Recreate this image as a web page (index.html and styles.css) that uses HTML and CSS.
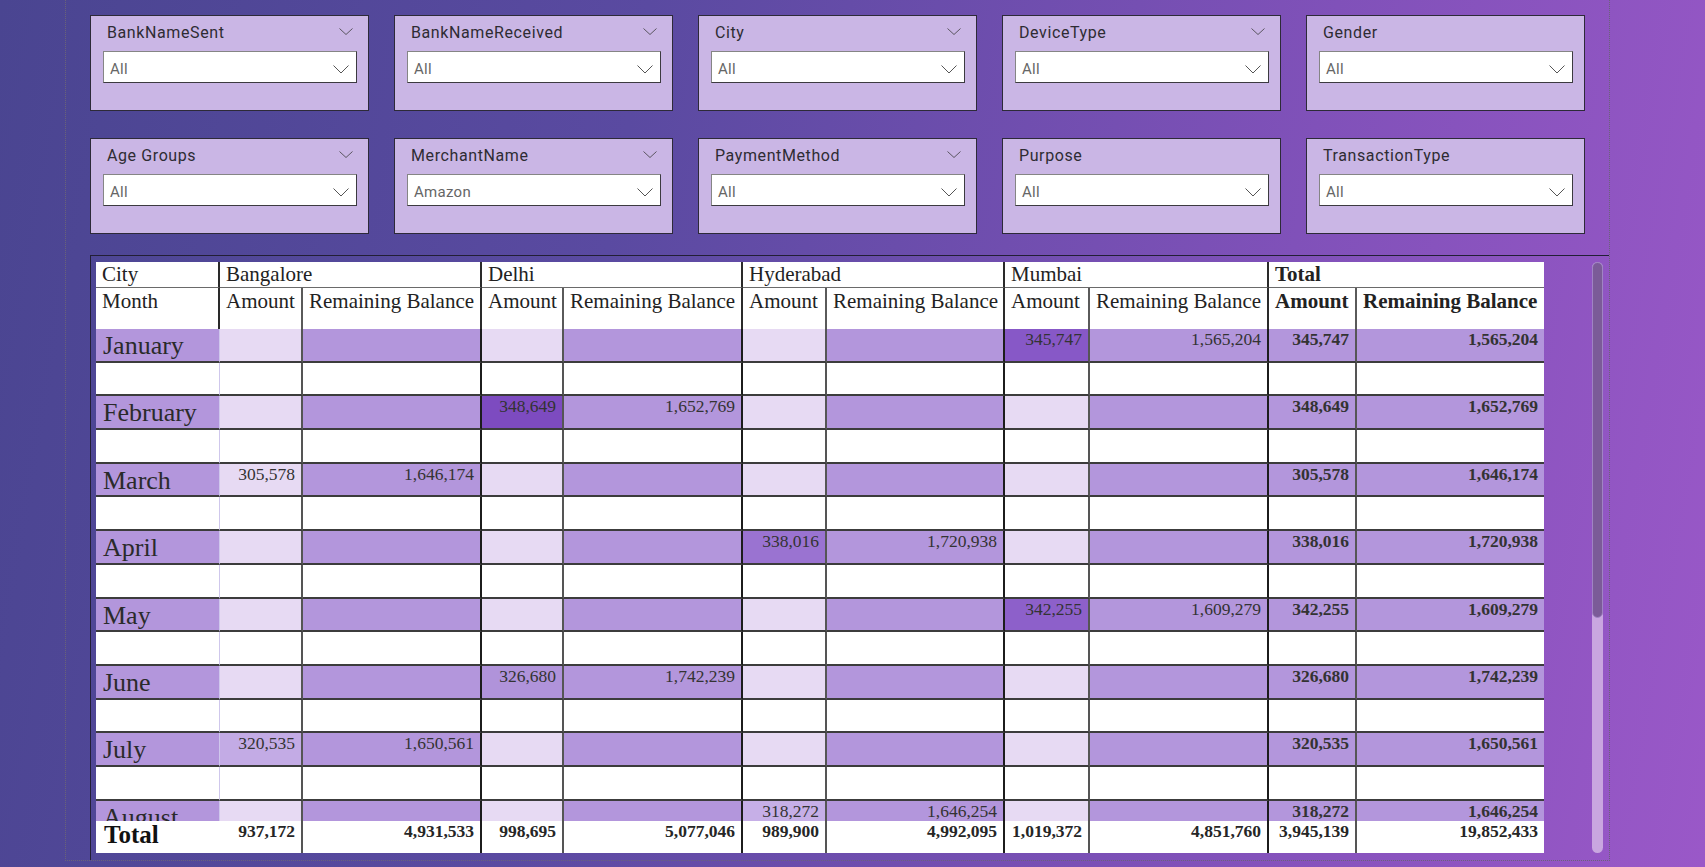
FILE: index.html
```html
<!DOCTYPE html>
<html>
<head>
<meta charset="utf-8">
<link rel="stylesheet" href="styles.css">
</head>
<body>
<div class="canvas">
  <div class="slicers">
    <div class="slicer">
      <div class="slicer-head"><span>BankNameSent</span><svg class="hchev" width="14" height="7" viewBox="0 0 14 7"><path d="M0.5 0.5 L7 6.5 L13.5 0.5"/></svg></div>
      <div class="dropdown"><span>All</span><svg class="dchev" width="16" height="9" viewBox="0 0 16 9"><path d="M0.5 0.5 L8 8 L15.5 0.5"/></svg></div>
    </div>
    <div class="slicer">
      <div class="slicer-head"><span>BankNameReceived</span><svg class="hchev" width="14" height="7" viewBox="0 0 14 7"><path d="M0.5 0.5 L7 6.5 L13.5 0.5"/></svg></div>
      <div class="dropdown"><span>All</span><svg class="dchev" width="16" height="9" viewBox="0 0 16 9"><path d="M0.5 0.5 L8 8 L15.5 0.5"/></svg></div>
    </div>
    <div class="slicer">
      <div class="slicer-head"><span>City</span><svg class="hchev" width="14" height="7" viewBox="0 0 14 7"><path d="M0.5 0.5 L7 6.5 L13.5 0.5"/></svg></div>
      <div class="dropdown"><span>All</span><svg class="dchev" width="16" height="9" viewBox="0 0 16 9"><path d="M0.5 0.5 L8 8 L15.5 0.5"/></svg></div>
    </div>
    <div class="slicer">
      <div class="slicer-head"><span>DeviceType</span><svg class="hchev" width="14" height="7" viewBox="0 0 14 7"><path d="M0.5 0.5 L7 6.5 L13.5 0.5"/></svg></div>
      <div class="dropdown"><span>All</span><svg class="dchev" width="16" height="9" viewBox="0 0 16 9"><path d="M0.5 0.5 L8 8 L15.5 0.5"/></svg></div>
    </div>
    <div class="slicer">
      <div class="slicer-head"><span>Gender</span></div>
      <div class="dropdown"><span>All</span><svg class="dchev" width="16" height="9" viewBox="0 0 16 9"><path d="M0.5 0.5 L8 8 L15.5 0.5"/></svg></div>
    </div>
    <div class="slicer">
      <div class="slicer-head"><span>Age Groups</span><svg class="hchev" width="14" height="7" viewBox="0 0 14 7"><path d="M0.5 0.5 L7 6.5 L13.5 0.5"/></svg></div>
      <div class="dropdown"><span>All</span><svg class="dchev" width="16" height="9" viewBox="0 0 16 9"><path d="M0.5 0.5 L8 8 L15.5 0.5"/></svg></div>
    </div>
    <div class="slicer">
      <div class="slicer-head"><span>MerchantName</span><svg class="hchev" width="14" height="7" viewBox="0 0 14 7"><path d="M0.5 0.5 L7 6.5 L13.5 0.5"/></svg></div>
      <div class="dropdown"><span>Amazon</span><svg class="dchev" width="16" height="9" viewBox="0 0 16 9"><path d="M0.5 0.5 L8 8 L15.5 0.5"/></svg></div>
    </div>
    <div class="slicer">
      <div class="slicer-head"><span>PaymentMethod</span><svg class="hchev" width="14" height="7" viewBox="0 0 14 7"><path d="M0.5 0.5 L7 6.5 L13.5 0.5"/></svg></div>
      <div class="dropdown"><span>All</span><svg class="dchev" width="16" height="9" viewBox="0 0 16 9"><path d="M0.5 0.5 L8 8 L15.5 0.5"/></svg></div>
    </div>
    <div class="slicer">
      <div class="slicer-head"><span>Purpose</span></div>
      <div class="dropdown"><span>All</span><svg class="dchev" width="16" height="9" viewBox="0 0 16 9"><path d="M0.5 0.5 L8 8 L15.5 0.5"/></svg></div>
    </div>
    <div class="slicer">
      <div class="slicer-head"><span>TransactionType</span></div>
      <div class="dropdown"><span>All</span><svg class="dchev" width="16" height="9" viewBox="0 0 16 9"><path d="M0.5 0.5 L8 8 L15.5 0.5"/></svg></div>
    </div>
  </div>

  <div class="visual">
    <div class="matrix">
      <div class="mhead">
        <div class="hc r1 bd">City</div>
        <div class="hc r1 span2 bd">Bangalore</div>
        <div class="hc r1 span2 bd">Delhi</div>
        <div class="hc r1 span2 bd">Hyderabad</div>
        <div class="hc r1 span2 bd">Mumbai</div>
        <div class="hc r1 span2 bold">Total</div>
        <div class="hc r2 bd">Month</div>
        <div class="hc r2 bgr">Amount</div><div class="hc r2 bd">Remaining Balance</div>
        <div class="hc r2 bgr">Amount</div><div class="hc r2 bd">Remaining Balance</div>
        <div class="hc r2 bgr">Amount</div><div class="hc r2 bd">Remaining Balance</div>
        <div class="hc r2 bgr">Amount</div><div class="hc r2 bd">Remaining Balance</div>
        <div class="hc r2 bgr bold">Amount</div><div class="hc r2 bold">Remaining Balance</div>
      </div>

      <div class="mbody">
        <div class="grid">
          <div class="c m">January</div>
          <div class="c a"></div><div class="c r"></div>
          <div class="c a"></div><div class="c r"></div>
          <div class="c a"></div><div class="c r"></div>
          <div class="c a k2">345,747</div><div class="c r">1,565,204</div>
          <div class="c t">345,747</div><div class="c t">1,565,204</div>
          <div class="c"></div><div class="c"></div><div class="c"></div><div class="c"></div><div class="c"></div><div class="c"></div><div class="c"></div><div class="c"></div><div class="c"></div><div class="c"></div><div class="c"></div>

          <div class="c m">February</div>
          <div class="c a"></div><div class="c r"></div>
          <div class="c a k1">348,649</div><div class="c r">1,652,769</div>
          <div class="c a"></div><div class="c r"></div>
          <div class="c a"></div><div class="c r"></div>
          <div class="c t">348,649</div><div class="c t">1,652,769</div>
          <div class="c"></div><div class="c"></div><div class="c"></div><div class="c"></div><div class="c"></div><div class="c"></div><div class="c"></div><div class="c"></div><div class="c"></div><div class="c"></div><div class="c"></div>

          <div class="c m">March</div>
          <div class="c a">305,578</div><div class="c r">1,646,174</div>
          <div class="c a"></div><div class="c r"></div>
          <div class="c a"></div><div class="c r"></div>
          <div class="c a"></div><div class="c r"></div>
          <div class="c t">305,578</div><div class="c t">1,646,174</div>
          <div class="c"></div><div class="c"></div><div class="c"></div><div class="c"></div><div class="c"></div><div class="c"></div><div class="c"></div><div class="c"></div><div class="c"></div><div class="c"></div><div class="c"></div>

          <div class="c m">April</div>
          <div class="c a"></div><div class="c r"></div>
          <div class="c a"></div><div class="c r"></div>
          <div class="c a k4">338,016</div><div class="c r">1,720,938</div>
          <div class="c a"></div><div class="c r"></div>
          <div class="c t">338,016</div><div class="c t">1,720,938</div>
          <div class="c"></div><div class="c"></div><div class="c"></div><div class="c"></div><div class="c"></div><div class="c"></div><div class="c"></div><div class="c"></div><div class="c"></div><div class="c"></div><div class="c"></div>

          <div class="c m">May</div>
          <div class="c a"></div><div class="c r"></div>
          <div class="c a"></div><div class="c r"></div>
          <div class="c a"></div><div class="c r"></div>
          <div class="c a k3">342,255</div><div class="c r">1,609,279</div>
          <div class="c t">342,255</div><div class="c t">1,609,279</div>
          <div class="c"></div><div class="c"></div><div class="c"></div><div class="c"></div><div class="c"></div><div class="c"></div><div class="c"></div><div class="c"></div><div class="c"></div><div class="c"></div><div class="c"></div>

          <div class="c m">June</div>
          <div class="c a"></div><div class="c r"></div>
          <div class="c a k5">326,680</div><div class="c r">1,742,239</div>
          <div class="c a"></div><div class="c r"></div>
          <div class="c a"></div><div class="c r"></div>
          <div class="c t">326,680</div><div class="c t">1,742,239</div>
          <div class="c"></div><div class="c"></div><div class="c"></div><div class="c"></div><div class="c"></div><div class="c"></div><div class="c"></div><div class="c"></div><div class="c"></div><div class="c"></div><div class="c"></div>

          <div class="c m">July</div>
          <div class="c a k6">320,535</div><div class="c r">1,650,561</div>
          <div class="c a"></div><div class="c r"></div>
          <div class="c a"></div><div class="c r"></div>
          <div class="c a"></div><div class="c r"></div>
          <div class="c t">320,535</div><div class="c t">1,650,561</div>
          <div class="c"></div><div class="c"></div><div class="c"></div><div class="c"></div><div class="c"></div><div class="c"></div><div class="c"></div><div class="c"></div><div class="c"></div><div class="c"></div><div class="c"></div>

          <div class="c m">August</div>
          <div class="c a"></div><div class="c r"></div>
          <div class="c a"></div><div class="c r"></div>
          <div class="c a k7">318,272</div><div class="c r">1,646,254</div>
          <div class="c a"></div><div class="c r"></div>
          <div class="c t">318,272</div><div class="c t">1,646,254</div>
        </div>
      </div>

      <div class="mtotal">
        <div class="c tl">Total</div>
        <div class="c">937,172</div><div class="c">4,931,533</div>
        <div class="c">998,695</div><div class="c">5,077,046</div>
        <div class="c">989,900</div><div class="c">4,992,095</div>
        <div class="c">1,019,372</div><div class="c">4,851,760</div>
        <div class="c">3,945,139</div><div class="c">19,852,433</div>
      </div>
    </div>

    <div class="scrollbar"><div class="thumb"></div></div>
  </div>
</div>
</body>
</html>
```

FILE: styles.css
```css
html, body {
  margin: 0;
  padding: 0;
}

body {
  width: 1705px;
  height: 867px;
  overflow: hidden;
  background: linear-gradient(100deg, #4a4591 0%, #5a4aa1 35%, #8051b9 72%, #9a58c8 100%);
  font-family: Roboto, "Liberation Sans", sans-serif;
}

.canvas {
  margin-left: 65px;
  width: 1545px;
  height: 861px;
  box-sizing: border-box;
  border-left: 1px dotted #6a6478;
  border-right: 1px dotted #6a6478;
  border-bottom: 1px dotted #6a6478;
  padding: 15px 0 0 24px;
}

/* ---------- slicers ---------- */
.slicers {
  display: grid;
  grid-template-columns: repeat(5, 279px);
  column-gap: 25px;
  row-gap: 27px;
}

.slicer {
  height: 96px;
  box-sizing: border-box;
  border: 1px solid #2d2a38;
  background: #cab6e5;
  padding: 7px 11px 0 12px;
}

.slicer-head {
  display: flex;
  justify-content: space-between;
  align-items: flex-start;
  height: 21px;
  line-height: 20px;
  padding: 0 4px 0 4px;
  font-size: 16px;
  letter-spacing: 0.6px;
  color: #2e2c33;
}

.hchev {
  margin-top: 5px;
  fill: none;
  stroke: #5a5560;
  stroke-width: 1;
}

.dropdown {
  margin-top: 7px;
  height: 32px;
  box-sizing: border-box;
  background: #ffffff;
  border: 1px solid #3c3a40;
  border-top-color: #858585;
  border-left-color: #858585;
  display: flex;
  justify-content: space-between;
  align-items: flex-start;
  padding: 8px 7px 0 6px;
  font-size: 15px;
  line-height: 18px;
  letter-spacing: 0.3px;
  color: #666;
}

.dchev {
  margin-top: 5px;
  fill: none;
  stroke: #555;
  stroke-width: 1;
}

/* ---------- matrix visual ---------- */
.visual {
  margin-top: 21px;
  height: 605px;
  box-sizing: border-box;
  border-top: 1px solid #221f36;
  border-left: 1px solid #221f36;
  padding: 6px 0 0 5px;
  display: flex;
  align-items: flex-start;
}

.matrix {
  width: 1448px;
  font-family: "Liberation Serif", "Times New Roman", serif;
  color: #262626;
}

.mhead,
.grid,
.mtotal {
  display: grid;
  grid-template-columns: 124px 83px 179px 82px 179px 84px 178px 85px 179px 88px 187px;
}

.mhead {
  background: #fff;
  grid-template-rows: 26px 41px;
}

.hc {
  box-sizing: border-box;
  font-size: 21px;
  white-space: nowrap;
  padding: 0 0 0 6px;
  color: #222;
}

.hc.r1 {
  border-bottom: 1px solid #6a6a6a;
}

.hc.r2 {
  padding-top: 1px;
}

.span2 {
  grid-column: span 2;
}

.bd {
  border-right: 2px solid #2a2a2a;
}

.bgr {
  border-right: 2px solid #5a5a5a;
}

.bold {
  font-weight: bold;
}

.mbody {
  height: 492px;
  overflow: hidden;
  background: #fff;
}

.grid {
  grid-auto-rows: 33.7px;
}

.c {
  box-sizing: border-box;
  white-space: nowrap;
  overflow: hidden;
  font-size: 17.5px;
  text-align: right;
  padding: 0 6px 0 0;
  color: #333;
  background: #fff;
}

.grid .c {
  border-bottom: 2px solid #3c3c3c;
  border-right: 2px solid #555;
}

.grid .c:nth-child(11n+1) {
  border-right: 1px solid #cfc7ec;
}

.grid .c:nth-child(11n+3),
.grid .c:nth-child(11n+5),
.grid .c:nth-child(11n+7),
.grid .c:nth-child(11n+9) {
  border-right-color: #1c1c1c;
}

.grid .c:nth-child(11n) {
  border-right: none;
}

.c.m {
  background: #b396dc;
  font-size: 26px;
  text-align: left;
  padding: 2px 0 0 7px;
  color: #2a2a2a;
}

.c.a {
  background: #e7daf3;
}

.c.r {
  background: #b396dc;
}

.c.t {
  background: #b396dc;
  font-weight: bold;
}

.c.k1 { background: #7d4bc0; }
.c.k2 { background: #8758c7; }
.c.k3 { background: #8d60ca; }
.c.k4 { background: #9a73d1; }
.c.k5 { background: #b093da; }
.c.k6 { background: #c3abe5; }
.c.k7 { background: #c6afe7; }

.mtotal {
  height: 32px;
  background: #fff;
}

.mtotal .c {
  font-weight: bold;
  padding-top: 0;
  color: #262626;
  border-right: 2px solid #555;
}

.mtotal .c:nth-child(3),
.mtotal .c:nth-child(5),
.mtotal .c:nth-child(7),
.mtotal .c:nth-child(9) {
  border-right-color: #1c1c1c;
}

.mtotal .c:nth-child(11) {
  border-right: none;
}

.mtotal .c.tl {
  border-right: none;
  font-size: 25px;
  text-align: left;
  padding: 0 0 0 8px;
  color: #111;
}

.scrollbar {
  margin-left: 48px;
  width: 11px;
  height: 591px;
  box-sizing: border-box;
  border-radius: 6px;
  background: #c9a6e0;
}

.thumb {
  height: 356px;
  box-sizing: border-box;
  border-radius: 6px;
  background: #7b5b98;
  border: 1px solid #a084c4;
}
```
